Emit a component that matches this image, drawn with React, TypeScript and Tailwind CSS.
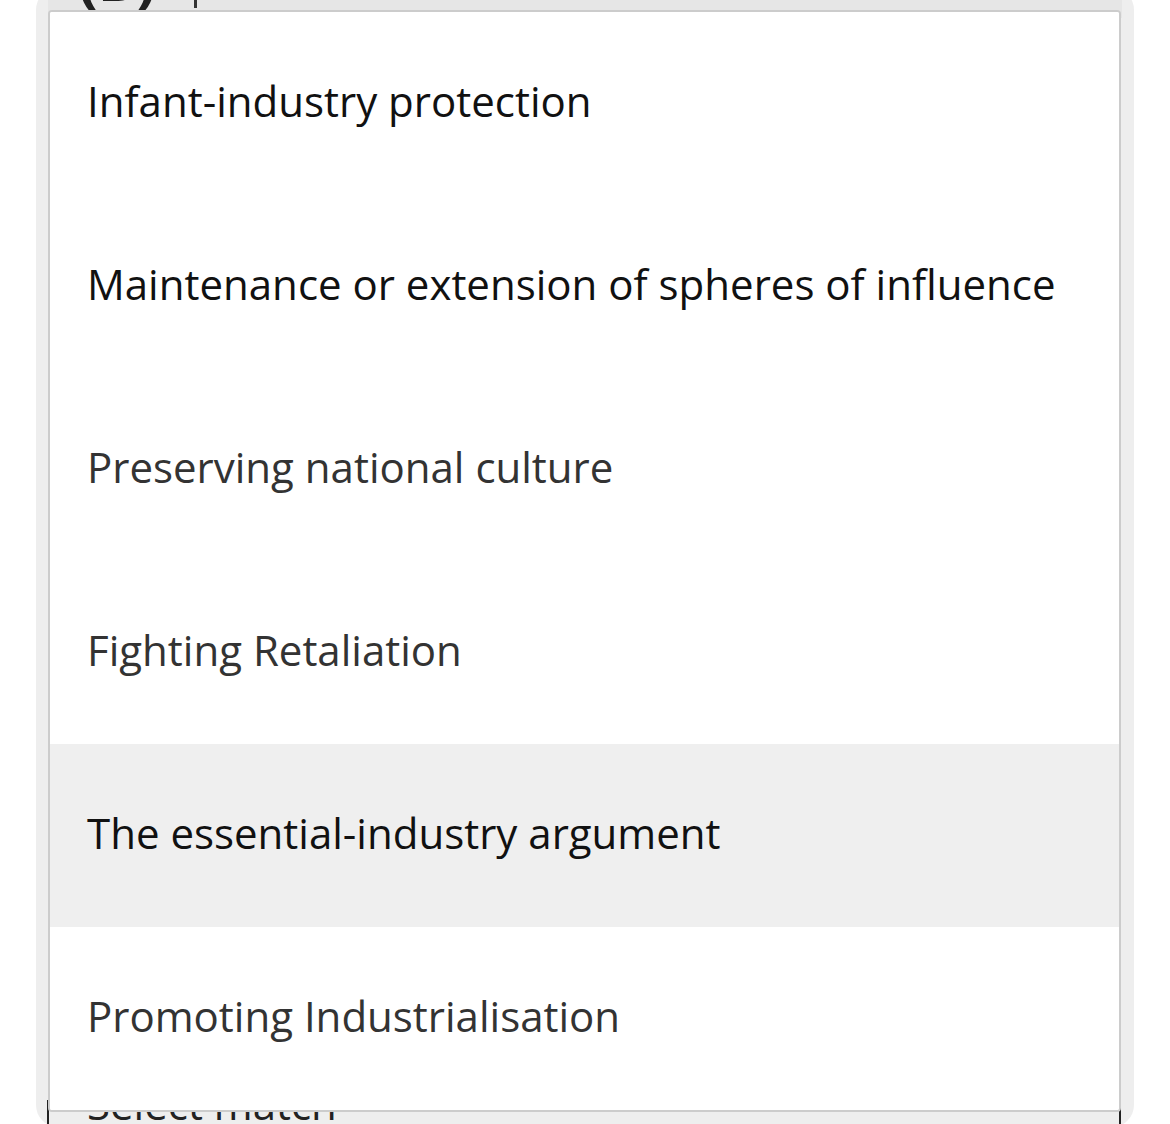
import React from 'react'

const options = [
  { label: 'Infant-industry protection', tone: 'text-[#111111]' },
  { label: 'Maintenance or extension of spheres of influence', tone: 'text-[#111111]' },
  { label: 'Preserving national culture', tone: 'text-[#333333]' },
  { label: 'Fighting Retaliation', tone: 'text-[#333333]' },
  { label: 'The essential-industry argument', tone: 'text-[#111111]', active: true },
  { label: 'Promoting Industrialisation', tone: 'text-[#333333]' },
]

function Dropdown() {
  return (
    <div className="absolute left-[48px] top-[10px] w-[1073px] h-[1102px] rounded-[4px] border-2 border-[#cccccc] bg-white overflow-hidden">
      {options.map((o) => (
        <div
          key={o.label}
          className={`flex h-[183px] items-center pb-[6px] pl-[37px] text-[42px] ${o.tone} ${o.active ? 'bg-[#efefef]' : 'bg-white'}`}
        >
          {o.label}
        </div>
      ))}
    </div>
  )
}

export default function App() {
  return (
    <div
      className="relative h-[1124px] w-[1170px] overflow-hidden bg-white"
      style={{ fontFamily: '"Open Sans", "Noto Sans", sans-serif' }}
    >
      <div className="mx-[36px] -mt-[12px] h-[1139px] overflow-hidden rounded-[22px] bg-[#eeeeee] flex flex-col">
        <div className="mx-[12px] flex h-[30px] items-start bg-[#e6e6e6] pl-[30px]">
          <span className="-mt-[38px] text-[58px] font-bold leading-none text-[#222222]">(B)</span>
          <span className="ml-[38px] h-[20px] w-[3px] bg-[#333333]" />
        </div>
        <div className="flex-1" />
        <div className="ml-[11px] mr-[13px] flex h-[27px] shrink-0 items-start justify-between border-x-2 border-t-2 border-[#222222] bg-[#eeeeee] pl-[38px] pr-[58px]">
          <span className="-mt-[19px] text-[42px] leading-none text-[#222222]">Select match</span>
          <span className="mt-[1px] h-0 w-0 border-x-[4px] border-t-[5px] border-x-transparent border-t-[#222222]" />
        </div>
      </div>
      <Dropdown />
    </div>
  )
}
